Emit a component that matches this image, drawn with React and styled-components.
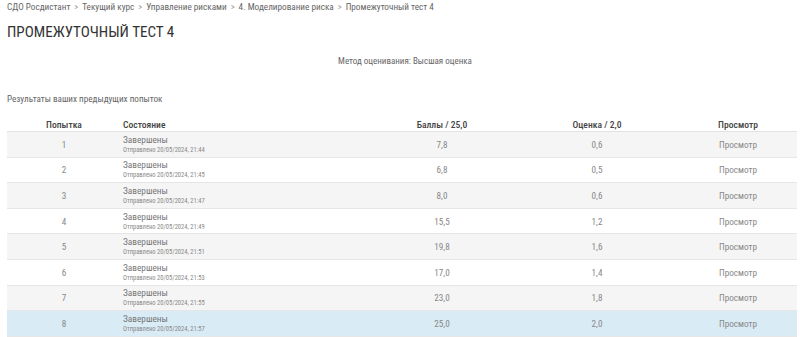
import React from 'react';
import styled, { createGlobalStyle } from 'styled-components';

const GlobalStyle = createGlobalStyle`
  body {
    margin: 0;
    background: #fff;
    font-family: Roboto, "Liberation Sans Narrow", sans-serif;
    font-stretch: condensed;
    color: #555;
  }
`;

const Page = styled.div`
  width: 800px;
  height: 337px;
  overflow: hidden;
  padding: 0 3px 0 7px;
  box-sizing: border-box;
`;

const Breadcrumb = styled.div`
  display: flex;
  align-items: center;
  gap: 4px;
  height: 14px;
  line-height: 14px;
  font-size: 9.2px;
  color: #666;
`;

const Sep = styled.span`
  color: #999;
  font-size: 8.5px;
`;

const Title = styled.h2`
  margin: 8px 0 0;
  height: 20px;
  line-height: 20px;
  font-size: 15.1px;
  font-weight: 400;
  color: #333;
  text-transform: uppercase;
`;

const Method = styled.div`
  margin-top: 13px;
  padding-left: 6px;
  line-height: 12px;
  text-align: center;
  font-size: 9px;
  color: #666;
`;

const Caption = styled.div`
  margin-top: 26px;
  line-height: 12px;
  font-size: 9.15px;
  color: #666;
`;

const Table = styled.table`
  margin-top: 12px;
  width: 790px;
  border-collapse: collapse;
  table-layout: fixed;
  font-size: 9.2px;
`;

const Th = styled.th`
  height: 14px;
  padding: 0;
  font-size: 9.6px;
  font-weight: 500;
  color: #444;
  text-align: ${p => p.$left ? 'left' : 'center'};
  padding-left: ${p => p.$left ? '2px' : '0'};
  border-bottom: 1px solid #e3e3e3;
  vertical-align: middle;
`;

const Row = styled.tr`
  background: ${p => p.$active ? '#d9ebf5' : p.$odd ? '#f5f5f5' : '#fff'};
  border-bottom: 1px solid #e6e6e6;
`;

const Td = styled.td`
  height: 24.6px;
  padding: 0;
  color: #888;
  text-align: ${p => p.$left ? 'left' : 'center'};
  padding-left: ${p => p.$left ? '2px' : '0'};
  vertical-align: middle;
`;

const State = styled.div`
  font-size: 9.3px;
  color: #777;
  line-height: 11px;
`;

const Sent = styled.div`
  font-size: 6.5px;
  color: #888;
  line-height: 10px;
`;

const attempts = [
  ['1', '21:44', '7,8', '0,6'],
  ['2', '21:45', '6,8', '0,5'],
  ['3', '21:47', '8,0', '0,6'],
  ['4', '21:49', '15,5', '1,2'],
  ['5', '21:51', '19,8', '1,6'],
  ['6', '21:53', '17,0', '1,4'],
  ['7', '21:55', '23,0', '1,8'],
  ['8', '21:57', '25,0', '2,0'],
];

const crumbs = ['СДО Росдистант', 'Текущий курс', 'Управление рисками', '4. Моделирование риска', 'Промежуточный тест 4'];

export default function App() {
  return (
    <Page>
      <GlobalStyle />
      <Breadcrumb>
        {crumbs.map((c, i) => (
          <React.Fragment key={c}>
            {i > 0 && <Sep>&gt;</Sep>}
            <span>{c}</span>
          </React.Fragment>
        ))}
      </Breadcrumb>
      <Title>Промежуточный тест 4</Title>
      <Method>Метод оценивания: Высшая оценка</Method>
      <Caption>Результаты ваших предыдущих попыток</Caption>
      <Table>
        <colgroup>
          <col style={{ width: 114 }} />
          <col style={{ width: 248 }} />
          <col style={{ width: 146 }} />
          <col style={{ width: 164 }} />
          <col style={{ width: 118 }} />
        </colgroup>
        <thead>
          <tr>
            <Th>Попытка</Th>
            <Th $left>Состояние</Th>
            <Th>Баллы / 25,0</Th>
            <Th>Оценка / 2,0</Th>
            <Th>Просмотр</Th>
          </tr>
        </thead>
        <tbody>
          {attempts.map(([n, t, score, grade], i) => (
            <Row key={n} $odd={i % 2 === 0} $active={i === attempts.length - 1}>
              <Td>{n}</Td>
              <Td $left>
                <State>Завершены</State>
                <Sent>Отправлено 20/05/2024, {t}</Sent>
              </Td>
              <Td>{score}</Td>
              <Td>{grade}</Td>
              <Td>Просмотр</Td>
            </Row>
          ))}
        </tbody>
      </Table>
    </Page>
  );
}
